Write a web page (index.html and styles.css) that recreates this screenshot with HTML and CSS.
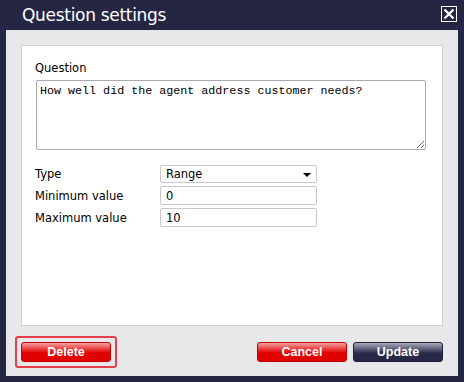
FILE: index.html
```html
<!DOCTYPE html>
<html lang="en">
<head>
    <meta charset="UTF-8">
    <title>Question settings</title>
    <link rel="stylesheet" href="styles.css">
</head>
<body>
    <div class="dialog">
        <div class="dialog-header">
            <h1 class="dialog-title">Question settings</h1>
            <button class="close-btn" aria-label="Close">
                <svg width="12" height="12" viewBox="0 0 12 12">
                    <path d="M1.5 1.5 L10.5 10.5 M10.5 1.5 L1.5 10.5" stroke="#fff" stroke-width="2.2" fill="none"/>
                </svg>
            </button>
        </div>
        <div class="dialog-body">
            <div class="form-box">
                <label class="field-label" for="question">Question</label>
                <textarea id="question" class="question-input">How well did the agent address customer needs?</textarea>

                <div class="form-rows">
                    <div class="form-row">
                        <span class="row-label">Type</span>
                        <div class="fake-select">
                            <span>Range</span>
                            <span class="caret"></span>
                        </div>
                    </div>
                    <div class="form-row">
                        <span class="row-label">Minimum value</span>
                        <input class="text-input" type="text" value="0">
                    </div>
                    <div class="form-row">
                        <span class="row-label">Maximum value</span>
                        <input class="text-input" type="text" value="10">
                    </div>
                </div>
            </div>
            <div class="dialog-footer">
                <div class="focus-ring">
                    <button class="btn btn-red">Delete</button>
                </div>
                <div class="footer-right">
                    <button class="btn btn-red">Cancel</button>
                    <button class="btn btn-dark">Update</button>
                </div>
            </div>
        </div>
    </div>
</body>
</html>
```

FILE: styles.css
```css
body {
    margin: 0;
    background: #252644;
    font-family: "DejaVu Sans", Verdana, sans-serif;
}

.dialog {
    width: 464px;
    height: 382px;
    display: flex;
    flex-direction: column;
}

.dialog-header {
    height: 30px;
    display: flex;
    align-items: center;
    justify-content: space-between;
    padding: 0 7px 0 22px;
}

.dialog-title {
    margin: 0;
    font-weight: normal;
    font-size: 17px;
    color: #fff;
    letter-spacing: -0.3px;
}

.close-btn {
    width: 16px;
    height: 16px;
    padding: 0;
    margin-top: -2px;
    border: 1px solid #fff;
    background: transparent;
    display: flex;
    align-items: center;
    justify-content: center;
}

.dialog-body {
    margin: 0 6px;
    height: 346px;
    box-sizing: border-box;
    background: #e8e8ea;
    padding: 15px 15px 0 15px;
}

.form-box {
    height: 281px;
    box-sizing: border-box;
    background: #fff;
    border: 1px solid #d2d2d6;
    padding: 15px 15px 0 13px;
}

.field-label {
    display: block;
    font-size: 11.5px;
    color: #000;
    margin-bottom: 5px;
}

.question-input {
    display: block;
    width: 390px;
    height: 70px;
    box-sizing: border-box;
    margin-left: 1px;
    border: 1px solid #a8a8b0;
    border-radius: 2px;
    padding: 3px 3px;
    font-family: "Liberation Mono", "Courier New", monospace;
    font-size: 11.7px;
    color: #000;
    resize: vertical;
}

.form-rows {
    margin-top: 15px;
    display: flex;
    flex-direction: column;
    gap: 3px;
}

.form-row {
    display: flex;
    align-items: center;
    font-size: 11.5px;
}

.row-label {
    width: 125px;
}

.fake-select,
.text-input {
    width: 157px;
    height: 19px;
    box-sizing: border-box;
    border: 1px solid #c8c8cc;
    border-radius: 2px;
    padding: 0 5px;
    font-family: "DejaVu Sans", Verdana, sans-serif;
    font-size: 11.5px;
    color: #000;
}

.fake-select {
    height: 18px;
    display: flex;
    align-items: center;
    justify-content: space-between;
}

.caret {
    width: 0;
    height: 0;
    margin-top: 2px;
    border-left: 4px solid transparent;
    border-right: 4px solid transparent;
    border-top: 4px solid #000;
}

.dialog-footer {
    display: flex;
    justify-content: space-between;
    align-items: center;
    margin-top: 10px;
}

.focus-ring {
    margin-left: -6px;
    padding: 4px;
    border: 2px solid #e63e4c;
    border-radius: 3px;
    display: flex;
}

.footer-right {
    display: flex;
    gap: 6px;
}

.btn {
    width: 90px;
    height: 20px;
    border-radius: 3px;
    font-family: "Liberation Sans", Arial, sans-serif;
    font-weight: bold;
    font-size: 12.5px;
    color: #fff;
    padding: 0;
}

.btn-red {
    border: 1px solid #c00000;
    background: linear-gradient(#f4a0a0 0%, #ea3a3a 35%, #e00000 55%, #e00000 100%);
}

.btn-dark {
    border: 1px solid #1e1f38;
    background: linear-gradient(#a8a8b8 0%, #5a5b78 35%, #2a2b4a 55%, #252644 100%);
}
```
